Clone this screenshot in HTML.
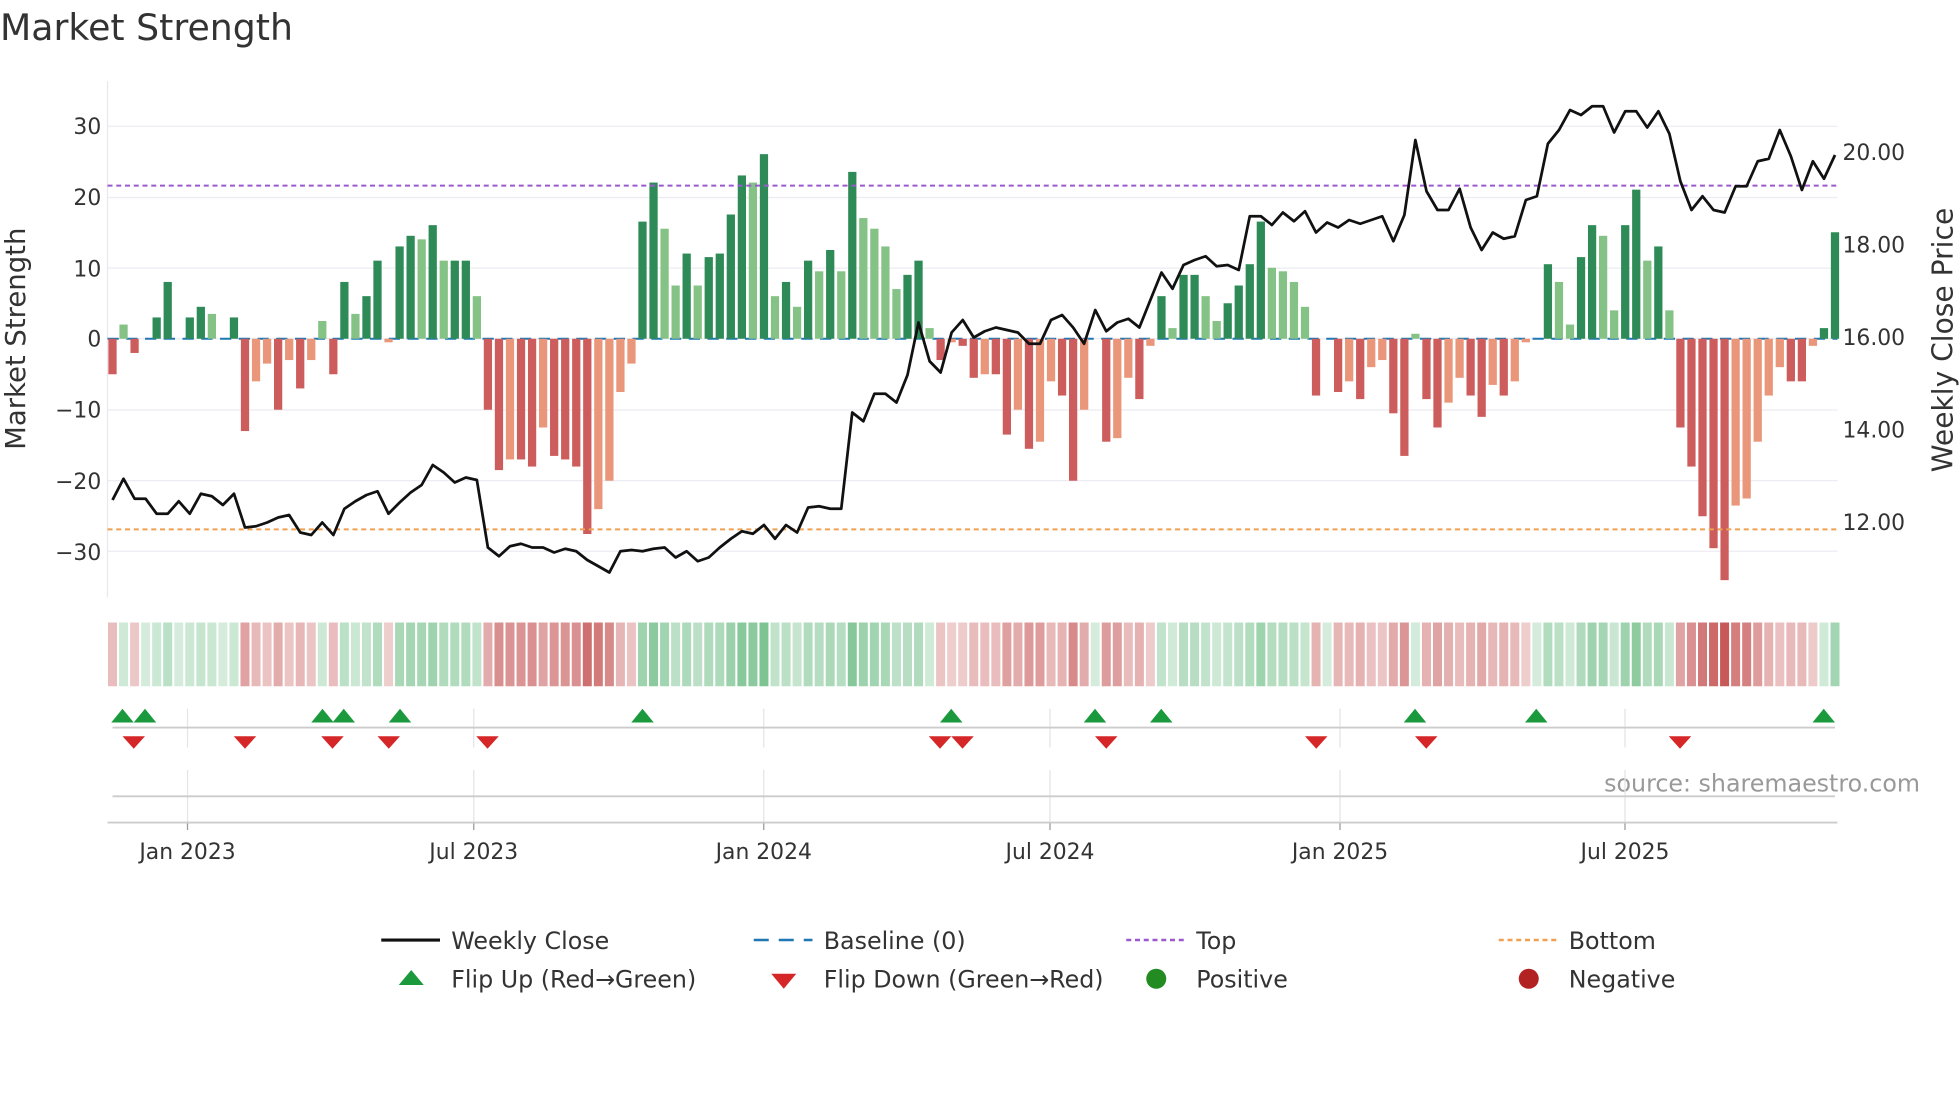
<!DOCTYPE html>
<html><head><meta charset="utf-8"><style>
html,body{margin:0;padding:0;background:#fff;width:1960px;height:1102px;overflow:hidden}
svg{display:block;font-family:"DejaVu Sans","Liberation Sans",sans-serif}
</style></head><body>
<svg id="s" width="1960" height="1102" viewBox="0 0 1568 881.6" xmlns="http://www.w3.org/2000/svg">
<text x="0" y="32" font-size="29" fill="#333">Market Strength</text>
<g font-size="17.5" fill="#333">
<text x="81" y="107" text-anchor="end">30</text>
<text x="81" y="164" text-anchor="end">20</text>
<text x="81" y="221" text-anchor="end">10</text>
<text x="81" y="277" text-anchor="end">0</text>
<text x="81" y="334" text-anchor="end">−10</text>
<text x="81" y="391" text-anchor="end">−20</text>
<text x="81" y="448" text-anchor="end">−30</text>
<text x="1474" y="128">20.00</text>
<text x="1474" y="202">18.00</text>
<text x="1474" y="276">16.00</text>
<text x="1474" y="350">14.00</text>
<text x="1474" y="424">12.00</text>
<text transform="translate(20,271) rotate(-90)" text-anchor="middle" font-size="22">Market Strength</text>
<text transform="translate(1562,272) rotate(-90)" text-anchor="middle" font-size="22.5">Weekly Close Price</text>
<text x="150" y="687" text-anchor="middle">Jan 2023</text>
<text x="379" y="687" text-anchor="middle">Jul 2023</text>
<text x="611" y="687" text-anchor="middle">Jan 2024</text>
<text x="840" y="687" text-anchor="middle">Jul 2024</text>
<text x="1072" y="687" text-anchor="middle">Jan 2025</text>
<text x="1300" y="687" text-anchor="middle">Jul 2025</text>
</g>
<text x="1536" y="633" text-anchor="end" font-size="19" fill="#999">source: sharemaestro.com</text>
<g id="g"></g>
<g font-size="19" fill="#333">
<line x1="305" y1="752" x2="352" y2="752" stroke="#111" stroke-width="2.5"/><text x="361" y="759">Weekly Close</text>
<line x1="603" y1="752" x2="650" y2="752" stroke="#1f77b4" stroke-width="2" stroke-dasharray="12,8"/><text x="659" y="759">Baseline (0)</text>
<line x1="901" y1="752" x2="948" y2="752" stroke="#9b59d0" stroke-width="2" stroke-dasharray="4,3"/><text x="957" y="759">Top</text>
<line x1="1199" y1="752" x2="1246" y2="752" stroke="#f0a050" stroke-width="2" stroke-dasharray="4,3"/><text x="1255" y="759">Bottom</text>
<polygon points="319,788 329,776 339,788" fill="#1a9a3c"/><text x="361" y="790">Flip Up (Red→Green)</text>
<polygon points="617,779 637,779 627,791" fill="#d62728"/><text x="659" y="790">Flip Down (Green→Red)</text>
<circle cx="925" cy="783" r="8" fill="#228b22"/><text x="957" y="790">Positive</text>
<circle cx="1223" cy="783" r="8" fill="#b22222"/><text x="1255" y="790">Negative</text>
</g>
</svg>
<script>
var v=[-5,2,-2,0,3,8,0,3,4.5,3.5,0,3,-13,-6,-3.5,-10,-3,-7,-3,2.5,-5,8,3.5,6,11,-0.5,13,14.5,14,16,11,11,11,6,-10,-18.5,-17,-17,-18,-12.5,-16.5,-17,-18,-27.5,-24,-20,-7.5,-3.5,16.5,22,15.5,7.5,12,7.5,11.5,12,17.5,23,22,26,6,8,4.5,11,9.5,12.5,9.5,23.5,17,15.5,13,7,9,11,1.5,-3,-0.5,-1,-5.5,-5,-5,-13.5,-10,-15.5,-14.5,-6,-8,-20,-10,0,-14.5,-14,-5.5,-8.5,-1,6,1.5,9,9,6,2.5,5,7.5,10.5,16.5,10,9.5,8,4.5,-8,0,-7.5,-6,-8.5,-4,-3,-10.5,-16.5,0.7,-8.5,-12.5,-9,-5.5,-8,-11,-6.5,-8,-6,-0.5,0,10.5,8,2,11.5,16,14.5,4,16,21,11,13,4,-12.5,-18,-25,-29.5,-34,-23.5,-22.5,-14.5,-8,-4,-6,-6,-1,1.5,15];
var p=[400,383,399,399,411,411,401,411,395,397,404,395,422,421,418,414,412,426,428,418,428,407,401,396,393,411,402,394,388,372,378,386,382,384,438,445,437,435,438,438,442,439,441,448,453,458,441,440,441,439,438,446,441,449,446,438,431,425,427,420,431,420,426,406,405,407,407,330,337,315,315,322,300,258,289,298,266,256,270,265,262,264,266,275,275,256,252,262,275,248,265,258,255,262,240,218,231,212,208,205,213,212,216,173,173,180,170,177,169,186,178,182,176,179,176,173,193,172,112,153,168,168,151,182,200,186,191,189,160,157,115,104,88,92,85,85,106,89,89,102,89,107,145,168,157,168,170,149,149,129,127,104,125,152,129,143,124];
var n=v.length,x0=90,dx=(1468-90)/(n-1),z=271,k=5.68,h='';
for(var y of [101,158,214.5,271,328,384.5,441])h+='<line x1="86" x2="1470" y1="'+y+'" y2="'+y+'" stroke="#ececf2"/>';
for(var t of [150,379,611,840,1072,1300])h+='<line x1="'+t+'" x2="'+t+'" y1="567" y2="598" stroke="#e4e4ea"/><line x1="'+t+'" x2="'+t+'" y1="616" y2="660" stroke="#e4e4ea"/><line x1="'+t+'" x2="'+t+'" y1="658" y2="664" stroke="#999"/>';
h+='<line x1="86" x2="86" y1="65" y2="478" stroke="#e8e8ee"/>';
h+='<line x1="90" x2="1468" y1="582" y2="582" stroke="#ccc" stroke-width="1.5"/><line x1="90" x2="1468" y1="637" y2="637" stroke="#ccc" stroke-width="1.5"/><line x1="86" x2="1470" y1="658" y2="658" stroke="#ccc" stroke-width="1.5"/>';
h+='<line x1="86" x2="1470" y1="271" y2="271" stroke="#1f77b4" stroke-width="1.6" stroke-dasharray="9,6"/>';
for(var i=0;i<n;i++){var x=x0+i*dx,a=v[i],pr=i?Math.abs(v[i-1]):0,dark=Math.abs(a)>=pr;
var c=a>=0?(dark?'#2e8b57':'#85c285'):(dark?'#cd5c5c':'#e9967a');
var hh=Math.abs(a)*k;h+='<rect x="'+(x-3.3)+'" y="'+(a>=0?z-hh:z)+'" width="6.6" height="'+hh+'" fill="'+c+'"/>';
var m=Math.min(Math.abs(a)/34,1);
var hc=a>=0?'rgba(46,160,80,'+(0.2+0.55*m)+')':'rgba(190,60,60,'+(0.25+0.6*m)+')';
h+='<rect x="'+(x-3.6)+'" y="498" width="7.2" height="51" fill="'+hc+'"/>';}
h+='<line x1="86" x2="1470" y1="148.5" y2="148.5" stroke="#9b59d0" stroke-width="1.6" stroke-dasharray="4,3"/>';
h+='<line x1="86" x2="1470" y1="423.5" y2="423.5" stroke="#f0a050" stroke-width="1.6" stroke-dasharray="4,3"/>';
var d='';for(i=0;i<n;i++)d+=(i?'L':'M')+(x0+i*dx).toFixed(1)+','+p[i];
h+='<path d="'+d+'" fill="none" stroke="#111" stroke-width="2.2" stroke-linejoin="round"/>';
for(var u of [98,116,258,275,320,514,761,876,929,1132,1229,1459])h+='<polygon points="'+(u-9)+',578 '+u+',567 '+(u+9)+',578" fill="#1a9a3c"/>';
for(var w of [107,196,266,311,390,752,770,885,1053,1141,1344])h+='<polygon points="'+(w-9)+',589 '+(w+9)+',589 '+w+',599" fill="#d62728"/>';
document.getElementById('g').innerHTML=h;
</script>
</body></html>
